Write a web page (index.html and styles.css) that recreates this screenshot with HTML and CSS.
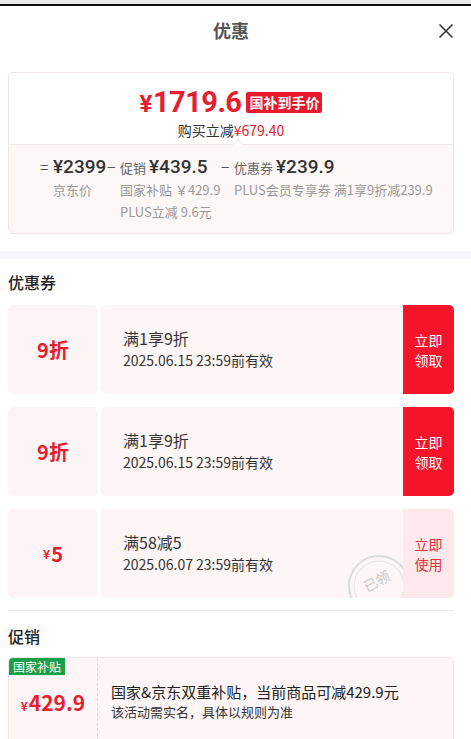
FILE: index.html
```html
<!DOCTYPE html>
<html lang="zh-CN">
<head>
    <meta charset="UTF-8">
    <title>优惠</title>
    <link rel="stylesheet" href="styles.css">
</head>
<body>
    <div class="topbar"></div>
    <div class="header">
        <span class="title">优惠</span>
        <svg class="close" width="16" height="16" viewBox="0 0 16 16">
            <path d="M1.5 1.5 L14.5 14.5 M14.5 1.5 L1.5 14.5" stroke="#333" stroke-width="1.6" fill="none"/>
        </svg>
    </div>

    <div class="content">
        <div class="summary">
            <div class="summary-top">
                <div class="price-row">
                    <span class="price"><span class="yen">¥</span>1719.6</span>
                    <span class="price-badge">国补到手价</span>
                </div>
                <div class="saving">购买立减<span class="red">¥679.40</span></div>
            </div>
            <div class="summary-bottom">
                <div class="calc-col col-base">
                    <span class="op">=</span>
                    <div class="calc-body">
                        <div class="calc-main"><span class="num">¥2399</span></div>
                        <div class="calc-sub">京东价</div>
                    </div>
                </div>
                <div class="calc-col col-promo">
                    <span class="op">−</span>
                    <div class="calc-body">
                        <div class="calc-main"><span class="tag">促销</span><span class="num">¥439.5</span></div>
                        <div class="calc-sub">国家补贴 ￥429.9</div>
                        <div class="calc-sub">PLUS立减 9.6元</div>
                    </div>
                </div>
                <div class="calc-col">
                    <span class="op">−</span>
                    <div class="calc-body">
                        <div class="calc-main"><span class="tag">优惠券</span><span class="num">¥239.9</span></div>
                        <div class="calc-sub">PLUS会员专享券 满1享9折减239.9</div>
                    </div>
                </div>
            </div>
        </div>
    </div>

    <div class="band"></div>

    <div class="content">
        <h2 class="section-title">优惠券</h2>

        <div class="coupon">
            <div class="coupon-left"><span class="big">9折</span></div>
            <div class="coupon-mid">
                <div class="coupon-name">满1享9折</div>
                <div class="coupon-date">2025.06.15 23:59前有效</div>
            </div>
            <div class="coupon-btn">立即<br>领取</div>
        </div>

        <div class="coupon">
            <div class="coupon-left"><span class="big">9折</span></div>
            <div class="coupon-mid">
                <div class="coupon-name">满1享9折</div>
                <div class="coupon-date">2025.06.15 23:59前有效</div>
            </div>
            <div class="coupon-btn">立即<br>领取</div>
        </div>

        <div class="coupon">
            <div class="coupon-left"><span class="small-yen">¥</span><span class="big">5</span></div>
            <div class="coupon-mid">
                <div class="coupon-name">满58减5</div>
                <div class="coupon-date">2025.06.07 23:59前有效</div>
                <svg class="stamp" width="64" height="64" viewBox="0 0 64 64">
                    <circle cx="32" cy="32" r="30" fill="none" stroke="#dcdcdc" stroke-width="2"/>
                    <circle cx="32" cy="32" r="25" fill="none" stroke="#e2e2e2" stroke-width="1"/>
                    <text x="32" y="32" text-anchor="middle" font-size="14" fill="#c8c8c8" transform="rotate(-28 32 32)" font-family="Noto Sans CJK SC, sans-serif">已领</text>
                </svg>
            </div>
            <div class="coupon-btn used">立即<br>使用</div>
        </div>

        <div class="divider"></div>

        <h2 class="section-title">促销</h2>

        <div class="promo">
            <div class="promo-left">
                <span class="promo-badge">国家补贴</span>
                <span class="promo-price"><span class="small-yen">¥</span>429.9</span>
            </div>
            <div class="promo-right">
                <div class="promo-name">国家&amp;京东双重补贴，当前商品可减429.9元</div>
                <div class="promo-desc">该活动需实名，具体以规则为准</div>
            </div>
        </div>
    </div>
</body>
</html>
```

FILE: styles.css
```css
body {
    margin: 0;
    background-color: #fff;
    font-family: "Noto Sans CJK SC", "Noto Sans", sans-serif;
    color: #333;
}

.topbar {
    height: 4px;
    background-color: #e9e9e9;
    border-bottom: 2px solid #111;
}

.header {
    height: 48px;
    display: flex;
    align-items: center;
    justify-content: center;
    padding-right: 9px;
    position: relative;
}

.title {
    font-size: 18px;
    font-weight: bold;
    color: #555;
}

.close {
    position: absolute;
    right: 17px;
    top: 17px;
}

.content {
    padding: 0 17px 0 8px;
}

/* price summary card */
.summary {
    margin-top: 18px;
    border: 1px solid #f3e4e6;
    border-radius: 5px;
    overflow: hidden;
}

.summary-top {
    height: 71px;
    display: flex;
    flex-direction: column;
    align-items: center;
    border-bottom: 1px solid #f6e8ea;
    position: relative;
}

.summary-top::after {
    content: "";
    position: absolute;
    left: 224px;
    bottom: -1px;
    width: 8px;
    height: 8px;
    background-color: #fdf7f7;
    border-left: 1px solid #f6e8ea;
    border-top: 1px solid #f6e8ea;
    transform: translateY(50%) rotate(45deg);
}

.price-row {
    display: flex;
    align-items: center;
    margin-top: 9px;
    height: 40px;
}

.price {
    font-family: Roboto, "Noto Sans", sans-serif;
    font-size: 29px;
    font-weight: bold;
    color: #e4202f;
    letter-spacing: -0.5px;
}

.price .yen {
    font-size: 24px;
    margin-right: 1px;
}

.price-badge {
    margin-left: 5px;
    background-color: #e81b2c;
    color: #fff;
    font-size: 14px;
    font-weight: bold;
    line-height: 21px;
    padding: 0 3px;
    border-radius: 2px;
}

.saving {
    font-size: 14px;
    line-height: 20px;
    margin-top: -2px;
}

.red {
    color: #e4202f;
}

.summary-bottom {
    height: 88px;
    background-color: #fdf7f7;
    display: flex;
    padding: 10px 0 0 31px;
    box-sizing: border-box;
}

.calc-col {
    display: flex;
}

.col-base {
    width: 67px;
}

.col-promo {
    width: 114px;
}

.op {
    width: 13px;
    flex-shrink: 0;
    font-size: 15px;
    line-height: 24px;
    color: #555;
}

.calc-main {
    display: flex;
    align-items: baseline;
    height: 24px;
    line-height: 24px;
}

.tag {
    font-size: 13px;
    color: #666;
    margin-right: 3px;
}

.num {
    font-family: Roboto, "Noto Sans", sans-serif;
    font-size: 19px;
    font-weight: 500;
    color: #333;
}

.calc-sub {
    font-size: 13px;
    line-height: 22px;
    color: #999;
    white-space: nowrap;
}

.band {
    height: 8px;
    margin-top: 17px;
    background-color: #f6f8fb;
}

.section-title {
    margin: 12px 0 0;
    font-size: 16px;
    line-height: 22px;
    font-weight: 500;
    color: #222;
}

/* coupons */
.coupon {
    display: flex;
    height: 89px;
    margin-top: 13px;
}

.section-title + .coupon {
    margin-top: 12px;
}

.coupon-left {
    width: 90px;
    background-color: #fdf4f5;
    border-radius: 5px;
    display: flex;
    align-items: center;
    justify-content: center;
    color: #e4202f;
    position: relative;
}

.coupon-left::before,
.coupon-left::after {
    content: "";
    position: absolute;
    right: -5px;
    width: 7px;
    height: 7px;
    border-radius: 50%;
    background-color: #fff;
}

.coupon-left::before {
    top: -3px;
}

.coupon-left::after {
    bottom: -3px;
}

.big {
    font-size: 20px;
    font-weight: bold;
}

.small-yen {
    font-size: 12px;
    font-weight: bold;
    margin-right: 1px;
}

.coupon-mid {
    flex: 1;
    margin-left: 3px;
    background-color: #fdf5f6;
    border-radius: 5px 0 0 5px;
    padding: 22px 0 0 22px;
    position: relative;
    overflow: hidden;
}

.coupon-name {
    font-size: 16px;
    line-height: 22px;
    color: #333;
}

.coupon-date {
    font-size: 14px;
    line-height: 22px;
    color: #333;
}

.stamp {
    position: absolute;
    right: -8px;
    bottom: -20px;
}

.coupon-btn {
    width: 51px;
    background-color: #f5142a;
    color: #fff;
    font-size: 14px;
    line-height: 20px;
    border-radius: 0 5px 5px 0;
    display: flex;
    align-items: center;
    justify-content: center;
    text-align: center;
}

.coupon-btn.used {
    background-color: #fde8ec;
    color: #e4303f;
}

.divider {
    height: 1px;
    background-color: #eee;
    margin-top: 12px;
}

.divider + .section-title {
    margin-top: 14px;
}

/* promotion card */
.promo {
    display: flex;
    margin-top: 10px;
    height: 88px;
    border: 1px solid #f5e3e6;
    border-radius: 5px;
    background-color: #fdf5f6;
    overflow: hidden;
}

.promo-left {
    width: 88px;
    border-right: 1px dashed #ecd3d7;
    position: relative;
    display: flex;
    align-items: center;
    justify-content: center;
}

.promo-badge {
    position: absolute;
    left: 0;
    top: 0;
    background-color: #19a14a;
    color: #fff;
    font-size: 12px;
    line-height: 17px;
    padding: 0 4px;
}

.promo-price {
    color: #e4202f;
    font-size: 21px;
    font-weight: bold;
}

.promo-right {
    padding: 23px 0 0 13px;
}

.promo-name {
    font-size: 15px;
    line-height: 22px;
    color: #222;
}

.promo-desc {
    font-size: 13px;
    line-height: 18px;
    color: #333;
}
```
